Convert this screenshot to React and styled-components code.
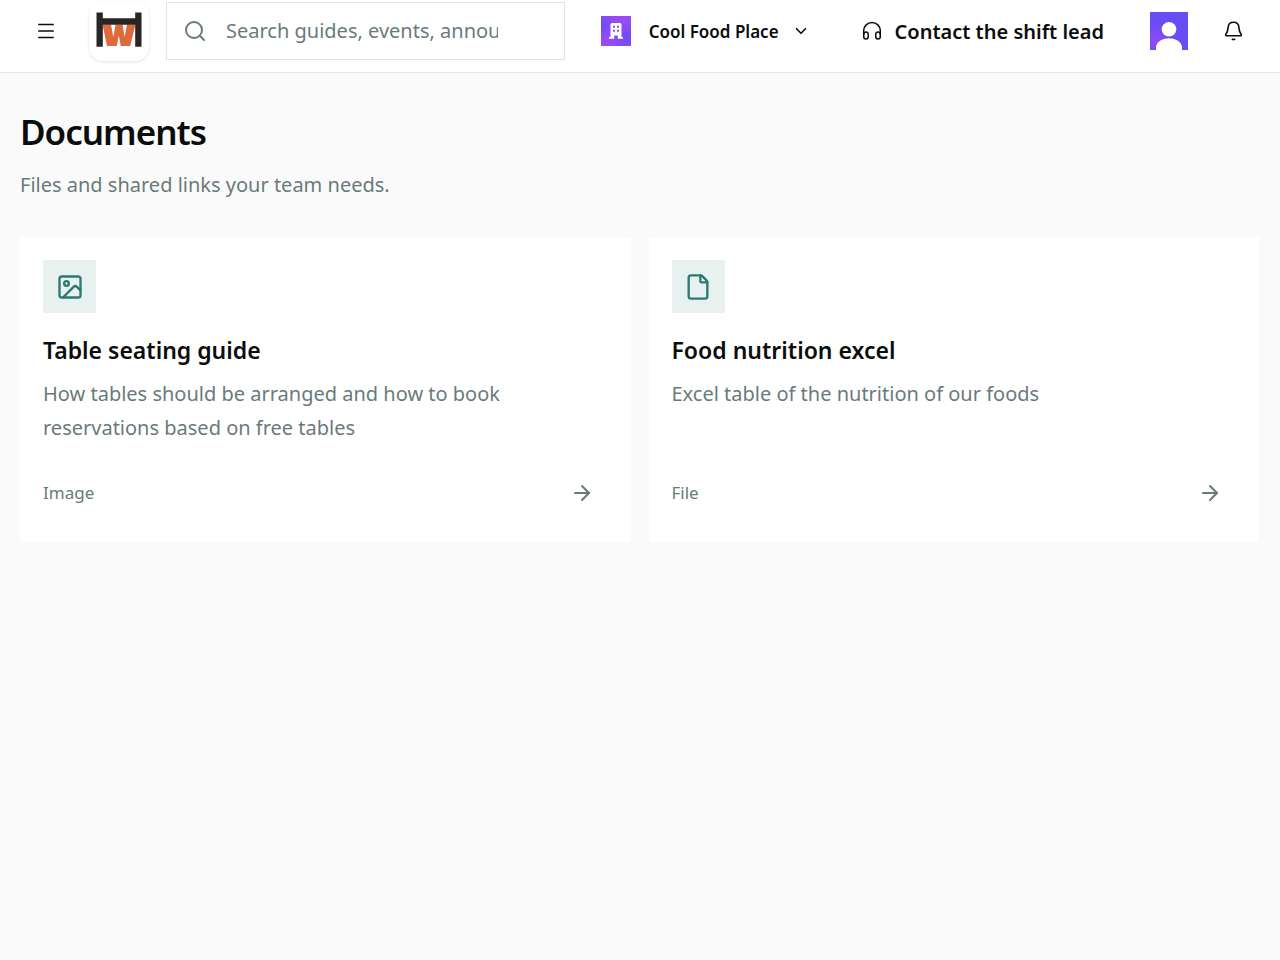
import React from 'react'
import styled, {createGlobalStyle} from 'styled-components'
import {ArrowRight, ChevronDown, File, Image, Search} from 'lucide-react'

const documents = [
    {
        id: 1,
        title: 'Table seating guide',
        desc: 'How tables should be arranged and how to book reservations based on free tables',
        type: 'Image',
        icon: Image,
    },
    {
        id: 2,
        title: 'Food nutrition excel',
        desc: 'Excel table of the nutrition of our foods',
        type: 'File',
        icon: File,
    },
];

function MenuIcon() {
    return (
        <svg width="22" height="22" viewBox="0 0 22 22" fill="none" stroke="currentColor" strokeWidth="1.7">
            <path d="M3.2 4.5h15.6M3.2 11h15.6M3.2 17.5h15.6" />
        </svg>
    )
}

function HeadphonesIcon() {
    return (
        <svg width="22" height="22" viewBox="0 0 22 22" fill="none" stroke="currentColor" strokeWidth="1.5" strokeLinecap="round" strokeLinejoin="round">
            <path d="M2.700 16V10.500a8.300 7.900 0 0 1 16.600 0V16" />
            <path d="M2.700 14.500C2.700 12.800 3.700 12 5 12S7.200 12.800 7.200 14.200V16.800C7.200 18.200 6.200 19 5 19S2.700 18.200 2.700 16.500" />
            <path d="M19.300 14.500C19.300 12.800 18.300 12 17 12S14.800 12.800 14.800 14.200V16.800C14.800 18.200 15.800 19 17 19S19.300 18.200 19.300 16.500" />
        </svg>
    )
}

function BellIcon() {
    return (
        <svg width="22" height="22" viewBox="0 0 22 22" fill="none" stroke="currentColor" strokeWidth="1.6" strokeLinecap="round" strokeLinejoin="round">
            <path d="M10.500 2.300C7.300 2.300 5.300 4.600 5.100 7.400C4.900 10.400 4.500 12.100 3 14C2.300 15 2.500 15.800 3.700 15.800H17.300C18.500 15.800 18.700 15 18 14C16.500 12.100 16.100 10.400 15.900 7.400C15.700 4.600 13.700 2.300 10.500 2.300Z" />
            <path d="M9.300 19.200C10 19.800 11 19.800 11.700 19.200" />
        </svg>
    )
}

function Logo() {
    return (
        <svg width="46" height="36" viewBox="0 0 46 36" role="img" aria-label="Home">
            <path d="M6.500 12.500H15L17.300 25L19.600 12.500H26.600L28.600 25L31 12.500H39.500L34.200 34H24.800L22.800 23.500L20.800 34H11Z" fill="#de6a3b" />
            <path d="M0.500 0.500H6.800V6.300H39.200V0.500H45.500V34.800H39.200V12.700H6.800V34.800H0.500Z" fill="#272624" />
        </svg>
    )
}

function PlaceIcon() {
    return (
        <svg width="30" height="30" viewBox="0 0 30 30" aria-hidden="true">
            <defs>
                <radialGradient id="placeLeft" cx="0.050" cy="0.300" r="0.450">
                    <stop offset="0" stopColor="#6a4cf5" />
                    <stop offset="1" stopColor="#6a4cf5" stopOpacity="0" />
                </radialGradient>
                <radialGradient id="placeRight" cx="0.850" cy="0.700" r="0.500">
                    <stop offset="0" stopColor="#6a4cf5" />
                    <stop offset="1" stopColor="#6a4cf5" stopOpacity="0" />
                </radialGradient>
            </defs>
            <rect width="30" height="30" fill="#974bf3" />
            <rect width="30" height="30" fill="url(#placeLeft)" />
            <rect width="30" height="30" fill="url(#placeRight)" />
            <path d="M9.500 8.500Q9.500 7 11 7H19Q20.500 7 20.500 8.500V21H22V22.800H16.800V19.500H13.200V22.800H8V21H9.500Z" fill="#fff" />
            <path d="M12 9.700h2v2h-2zM16 9.700h2v2h-2zM12 13.800h2v2h-2zM16 13.800h2v2h-2z" fill="#8a4bf4" />
        </svg>
    )
}

function UserIcon() {
    return (
        <svg width="38" height="38" viewBox="0 0 38 38" aria-hidden="true">
            <defs>
                <radialGradient id="userGlow" cx="0.150" cy="0.750" r="0.400">
                    <stop offset="0" stopColor="#9a4bf2" stopOpacity="0.800" />
                    <stop offset="1" stopColor="#9a4bf2" stopOpacity="0" />
                </radialGradient>
            </defs>
            <rect width="38" height="38" fill="#6a4cf5" />
            <rect width="38" height="38" fill="url(#userGlow)" />
            <circle cx="19" cy="17.300" r="7.300" fill="#fff" />
            <path d="M6 38V34.500C7.500 29 13 26.300 19 26.300S30.500 29 32 34.500V38Z" fill="#fff" />
        </svg>
    )
}

function App() {
  return (
    <>
        <GlobalStyle />
        <Header>
            <IconButton aria-label="Menu"><MenuIcon /></IconButton>
            <LogoLink href="#"><Logo /></LogoLink>
            <SearchBox>
                <Search size={24} strokeWidth={2} />
                <SearchInput type="text" aria-label="Search" placeholder="Search guides, events, announcements" />
            </SearchBox>
            <PlaceButton>
                <PlaceIcon />
                Cool Food Place
                <ChevronDown size={18} strokeWidth={2.2} />
            </PlaceButton>
            <ContactButton>
                <HeadphonesIcon />
                Contact the shift lead
            </ContactButton>
            <UserButton aria-label="Account"><UserIcon /></UserButton>
            <IconButton aria-label="Notifications"><BellIcon /></IconButton>
        </Header>
        <Main>
            <Title>Documents</Title>
            <Subtitle>Files and shared links your team needs.</Subtitle>
            <Grid>
                {documents.map(({id, title, desc, type, icon: Icon}) => (
                    <Card href="#" key={id}>
                        <IconTile><Icon size={28} strokeWidth={2} /></IconTile>
                        <CardTitle>{title}</CardTitle>
                        <CardDesc>{desc}</CardDesc>
                        <CardFooter>
                            <span>{type}</span>
                            <ArrowRight size={24} strokeWidth={2} />
                        </CardFooter>
                    </Card>
                ))}
            </Grid>
        </Main>
    </>
  )
}

export default App

const GlobalStyle = createGlobalStyle`
*{
    box-sizing:border-box;
}
body{
    margin:0;
    background-color:#fafafa;
    color:#0b0d0c;
    font-family:"Noto Sans", sans-serif;
}
button, input{
    font-family:inherit;
    color:inherit;
}
svg{
    display:block;
    flex-shrink:0;
}
`

const Header = styled.header`
display:flex;
align-items:center;
padding:0 20px 10px;
height:73px;
background-color:#fff;
border-bottom:1px solid #e3e8e7;
`

const Button = styled.button`
display:flex;
align-items:center;
justify-content:center;
flex-shrink:0;
padding:0;
border:none;
background:none;
white-space:nowrap;
cursor:pointer;
`

const IconButton = styled(Button)`
width:52px;
height:52px;
`

const LogoLink = styled.a`
display:flex;
align-items:center;
justify-content:center;
flex-shrink:0;
width:60px;
height:60px;
margin:0 17px;
padding-bottom:2px;
border-radius:14px;
background-color:#fff;
box-shadow:0 1px 3px rgba(0, 0, 0, 0.12);
`

const SearchBox = styled.label`
display:flex;
align-items:center;
flex:1;
min-width:0;
height:58px;
padding:0 66px 0 16px;
gap:19px;
border:1px solid #dfe5e4;
color:#6a7a7b;
`

const SearchInput = styled.input`
flex:1;
min-width:0;
padding:0;
border:none;
outline:none;
background:none;
font-size:20px;
line-height:32px;

&::placeholder{
    color:#6a7a7b;
    opacity:1;
}
`

const PlaceButton = styled(Button)`
gap:18px;
margin-left:36px;
font-size:17px;
font-weight:600;

svg:last-child{
    margin-left:-5px;
}
`

const ContactButton = styled(Button)`
gap:12px;
margin-left:51px;
font-size:20px;
font-weight:600;
`

const UserButton = styled(Button)`
margin:0 20px 0 46px;
`

const Main = styled.main`
padding:35px 21px 36px 20px;
`

const Title = styled.h1`
margin:0;
font-size:35px;
font-weight:600;
line-height:48px;
letter-spacing:-1px;
`

const Subtitle = styled.p`
margin:13px 0 36px;
font-size:20px;
line-height:32px;
color:#6a7a7b;
`

const Grid = styled.div`
display:grid;
grid-template-columns:repeat(2, 1fr);
gap:18px;
`

const Card = styled.a`
display:flex;
flex-direction:column;
padding:23px 23px 33px;
background-color:#fff;
color:inherit;
text-decoration:none;
`

const IconTile = styled.span`
display:flex;
align-items:center;
justify-content:center;
width:53px;
height:53px;
background-color:#e8f1f0;
color:#2b7a72;
`

const CardTitle = styled.h2`
margin:19px 0 9px;
font-size:23px;
font-weight:600;
line-height:36px;
`

const CardDesc = styled.p`
margin:0;
font-size:20px;
line-height:34px;
color:#6a7a7b;
`

const CardFooter = styled.div`
display:flex;
align-items:center;
justify-content:space-between;
margin-top:auto;
padding:32px 14px 0 0;
font-size:17px;
line-height:32px;
color:#6a7a7b;
`
